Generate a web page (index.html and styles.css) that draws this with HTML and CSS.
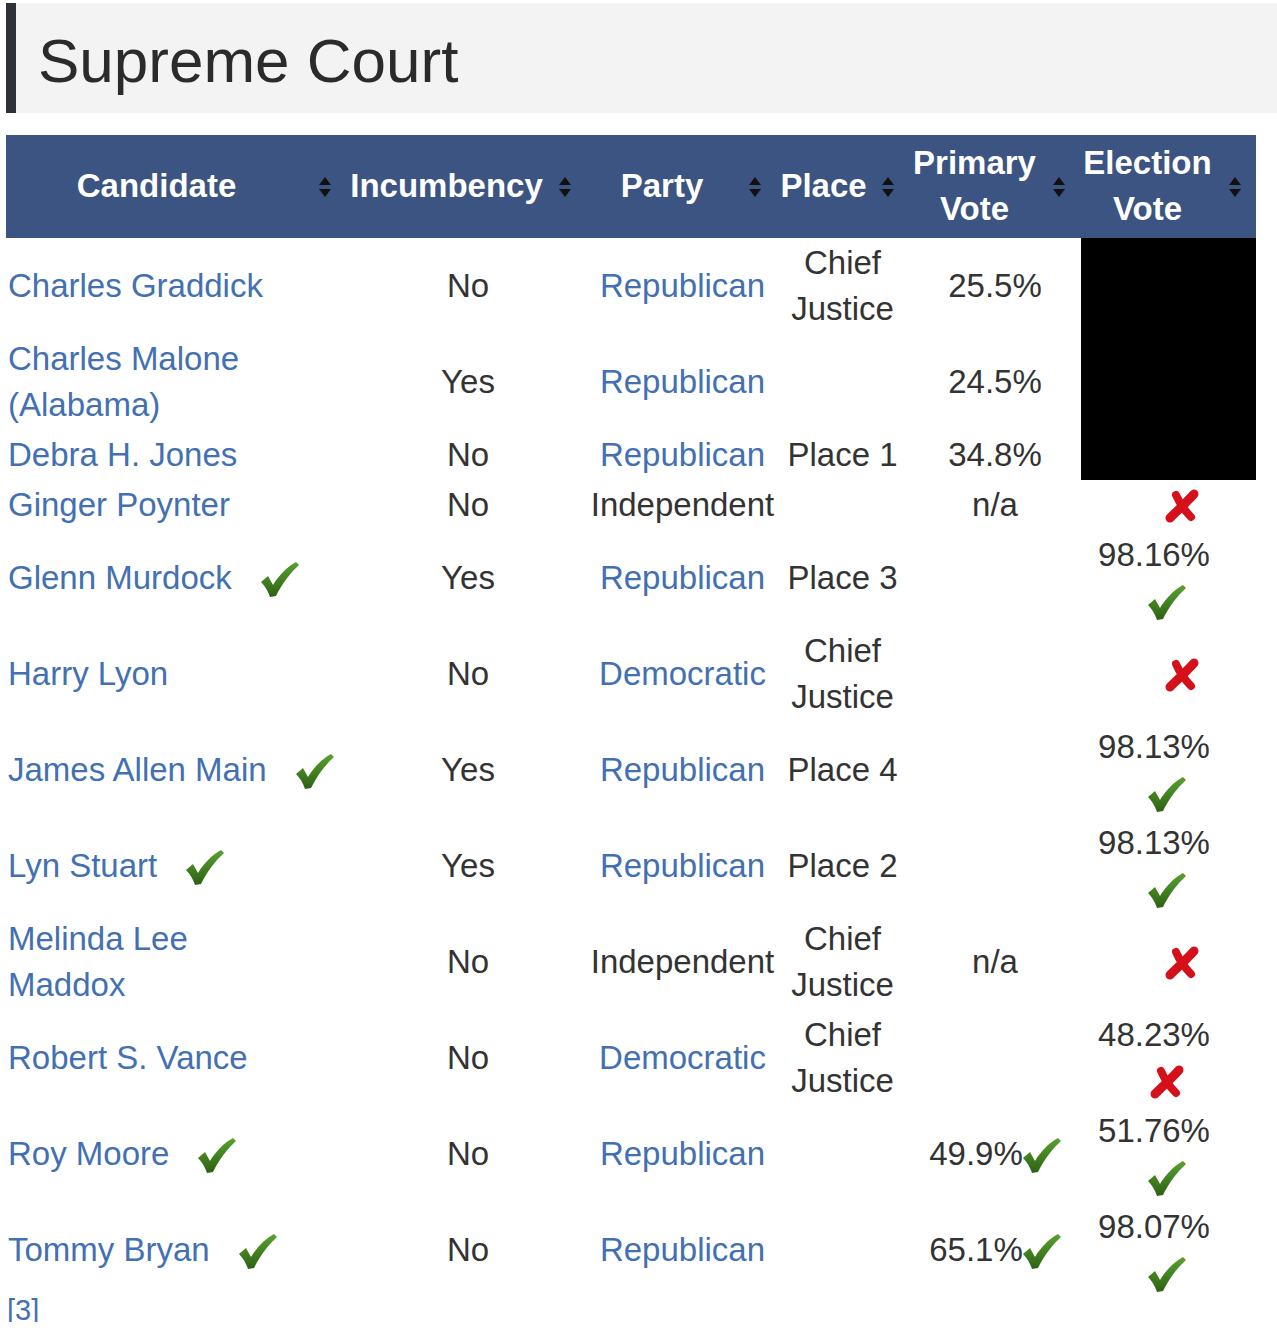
FILE: index.html
```html
<!DOCTYPE html>
<html lang="en">
<head>
<meta charset="utf-8">
<title>Supreme Court</title>
<link rel="stylesheet" href="styles.css">
</head>
<body>
<svg class="defs" width="0" height="0" aria-hidden="true">
  <defs>
    <linearGradient id="g-check" x1="0" y1="0" x2="0" y2="1">
      <stop offset="0" stop-color="#5aa132"/>
      <stop offset="1" stop-color="#2c6112"/>
    </linearGradient>
    <symbol id="i-check" viewBox="0 0 38 36">
      <path d="M0 21 L7 15 L12 24 C18 14 26 6 35 1 L38 4 C29 12 21 23 15 35 L9 36 C7 30 4 25 0 21 Z" fill="url(#g-check)"/>
    </symbol>
    <symbol id="i-cross" viewBox="0 0 36 34">
      <path d="M30 5 C23 13 14 21 6 29" stroke="#d6101a" stroke-width="9" stroke-linecap="round" fill="none"/>
      <path d="M12 6 C15 13 20 21 27 28" stroke="#d6101a" stroke-width="8" stroke-linecap="round" fill="none"/>
    </symbol>
    <symbol id="i-sort" viewBox="0 0 12 22">
      <path d="M0 9 L6 1 L12 9 Z M0 13 L6 21 L12 13 Z" fill="#111"/>
    </symbol>
  </defs>
</svg>

<div class="page">
  <h2 class="section-title">Supreme Court</h2>

  <table class="results">
    <colgroup>
      <col class="w-cand"><col class="w-inc"><col class="w-party"><col class="w-place"><col class="w-prim"><col class="w-elec">
    </colgroup>
    <thead>
      <tr>
        <th class="c-cand">Candidate<svg class="sort"><use href="#i-sort"/></svg></th>
        <th class="c-inc">Incumbency<svg class="sort"><use href="#i-sort"/></svg></th>
        <th class="c-party">Party<svg class="sort"><use href="#i-sort"/></svg></th>
        <th class="c-place">Place<svg class="sort"><use href="#i-sort"/></svg></th>
        <th class="c-prim">Primary Vote<svg class="sort"><use href="#i-sort"/></svg></th>
        <th class="c-elec">Election Vote<svg class="sort"><use href="#i-sort"/></svg></th>
      </tr>
    </thead>
    <tbody>
      <tr>
        <td class="c-cand"><a href="#">Charles Graddick</a></td>
        <td class="c-inc">No</td>
        <td class="c-party"><a href="#">Republican</a></td>
        <td class="c-place">Chief Justice</td>
        <td class="c-prim">25.5%</td>
        <td class="c-elec redacted" rowspan="3"></td>
      </tr>
      <tr>
        <td class="c-cand"><a href="#">Charles Malone (Alabama)</a></td>
        <td class="c-inc">Yes</td>
        <td class="c-party"><a href="#">Republican</a></td>
        <td class="c-place"></td>
        <td class="c-prim">24.5%</td>
      </tr>
      <tr>
        <td class="c-cand"><a href="#">Debra H. Jones</a></td>
        <td class="c-inc">No</td>
        <td class="c-party"><a href="#">Republican</a></td>
        <td class="c-place">Place 1</td>
        <td class="c-prim">34.8%</td>
      </tr>
      <tr>
        <td class="c-cand"><a href="#">Ginger Poynter</a></td>
        <td class="c-inc">No</td>
        <td class="c-party">Independent</td>
        <td class="c-place"></td>
        <td class="c-prim">n/a</td>
        <td class="c-elec"><svg class="cross solo"><use href="#i-cross"/></svg></td>
      </tr>
      <tr>
        <td class="c-cand"><a href="#">Glenn Murdock</a><svg class="check after-name"><use href="#i-check"/></svg></td>
        <td class="c-inc">Yes</td>
        <td class="c-party"><a href="#">Republican</a></td>
        <td class="c-place">Place 3</td>
        <td class="c-prim"></td>
        <td class="c-elec"><span class="pct">98.16%</span><br><svg class="check"><use href="#i-check"/></svg></td>
      </tr>
      <tr>
        <td class="c-cand"><a href="#">Harry Lyon</a></td>
        <td class="c-inc">No</td>
        <td class="c-party"><a href="#">Democratic</a></td>
        <td class="c-place">Chief Justice</td>
        <td class="c-prim"></td>
        <td class="c-elec"><svg class="cross solo"><use href="#i-cross"/></svg></td>
      </tr>
      <tr>
        <td class="c-cand"><a href="#">James Allen Main</a><svg class="check after-name"><use href="#i-check"/></svg></td>
        <td class="c-inc">Yes</td>
        <td class="c-party"><a href="#">Republican</a></td>
        <td class="c-place">Place 4</td>
        <td class="c-prim"></td>
        <td class="c-elec"><span class="pct">98.13%</span><br><svg class="check"><use href="#i-check"/></svg></td>
      </tr>
      <tr>
        <td class="c-cand"><a href="#">Lyn Stuart</a><svg class="check after-name"><use href="#i-check"/></svg></td>
        <td class="c-inc">Yes</td>
        <td class="c-party"><a href="#">Republican</a></td>
        <td class="c-place">Place 2</td>
        <td class="c-prim"></td>
        <td class="c-elec"><span class="pct">98.13%</span><br><svg class="check"><use href="#i-check"/></svg></td>
      </tr>
      <tr>
        <td class="c-cand"><a href="#">Melinda Lee<br>Maddox</a></td>
        <td class="c-inc">No</td>
        <td class="c-party">Independent</td>
        <td class="c-place">Chief Justice</td>
        <td class="c-prim">n/a</td>
        <td class="c-elec"><svg class="cross solo"><use href="#i-cross"/></svg></td>
      </tr>
      <tr>
        <td class="c-cand"><a href="#">Robert S. Vance</a></td>
        <td class="c-inc">No</td>
        <td class="c-party"><a href="#">Democratic</a></td>
        <td class="c-place">Chief Justice</td>
        <td class="c-prim"></td>
        <td class="c-elec"><span class="pct">48.23%</span><br><svg class="cross"><use href="#i-cross"/></svg></td>
      </tr>
      <tr>
        <td class="c-cand"><a href="#">Roy Moore</a><svg class="check after-name"><use href="#i-check"/></svg></td>
        <td class="c-inc">No</td>
        <td class="c-party"><a href="#">Republican</a></td>
        <td class="c-place"></td>
        <td class="c-prim">49.9%<svg class="check"><use href="#i-check"/></svg></td>
        <td class="c-elec"><span class="pct">51.76%</span><br><svg class="check"><use href="#i-check"/></svg></td>
      </tr>
      <tr>
        <td class="c-cand"><a href="#">Tommy Bryan</a><svg class="check after-name"><use href="#i-check"/></svg></td>
        <td class="c-inc">No</td>
        <td class="c-party"><a href="#">Republican</a></td>
        <td class="c-place"></td>
        <td class="c-prim">65.1%<svg class="check"><use href="#i-check"/></svg></td>
        <td class="c-elec"><span class="pct">98.07%</span><br><svg class="check"><use href="#i-check"/></svg></td>
      </tr>
    </tbody>
  </table>
  <p class="refs"><a href="#">[3]</a></p>
</div>
</body>
</html>
```

FILE: styles.css
```css
html, body {
  margin: 0;
  padding: 0;
  background: #ffffff;
}

body {
  font-family: "Liberation Sans", Arial, Helvetica, sans-serif;
  color: #333333;
}

.defs {
  position: absolute;
  width: 0;
  height: 0;
  overflow: hidden;
}

a {
  color: #4270b3;
  text-decoration: none;
}

.page {
  padding: 3px 0 0 6px;
}

.section-title {
  margin: 0 0 22px;
  padding: 6px 0 0 22px;
  background: #f3f3f3;
  border-left: 10px solid #2e3136;
  font-size: 62px;
  line-height: 104px;
  font-weight: normal;
  color: #2b2b2b;
}

.results {
  width: 1250px;
  table-layout: fixed;
  border-collapse: separate;
  border-spacing: 0;
  font-size: 33px;
  line-height: 46px;
}

.w-cand { width: 331px; }
.w-inc { width: 248px; }
.w-party { width: 195px; }
.w-place { width: 125px; }
.w-prim { width: 173px; }
.w-elec { width: 178px; }

.results th {
  position: relative;
  background: #3c5481;
  color: #ffffff;
  font-weight: bold;
  text-align: center;
  vertical-align: middle;
  padding: 5px 34px 6px 0;
}

.results th .sort {
  position: absolute;
  top: 50%;
  width: 12px;
  height: 22px;
  margin-top: -11px;
  right: 13px;
}

th.c-cand { padding-right: 30px; }
th.c-cand .sort { right: 6px; }
th.c-inc { padding-right: 29px; }
th.c-inc .sort { right: 14px; }
th.c-party { padding-right: 41px; }
th.c-party .sort { right: 19px; }
th.c-place { padding-right: 38px; }
th.c-place .sort { right: 11px; }
th.c-prim .sort { right: 13px; }
th.c-elec { padding-right: 39px; }
th.c-elec .sort { right: 15px; }

.results td {
  padding: 2px 0;
  text-align: center;
  vertical-align: middle;
}

.results td.c-cand {
  text-align: left;
  padding-left: 2px;
}

.results td.c-inc { padding-left: 14px; }
.results td.c-prim { padding-left: 7px; }

.results td.redacted {
  background: #000000;
  border-left: 3px solid #ffffff;
}

.check {
  display: inline-block;
  width: 38px;
  height: 36px;
  vertical-align: -8px;
}

.check.after-name {
  margin-left: 29px;
}

.cross {
  display: inline-block;
  width: 36px;
  height: 34px;
  vertical-align: -7px;
}

.cross.solo {
  margin-left: 30px;
}

.pct {
  margin-right: 26px;
}

.refs {
  margin: 0;
  padding-left: 1px;
  font-size: 29px;
  line-height: 24px;
}
```
